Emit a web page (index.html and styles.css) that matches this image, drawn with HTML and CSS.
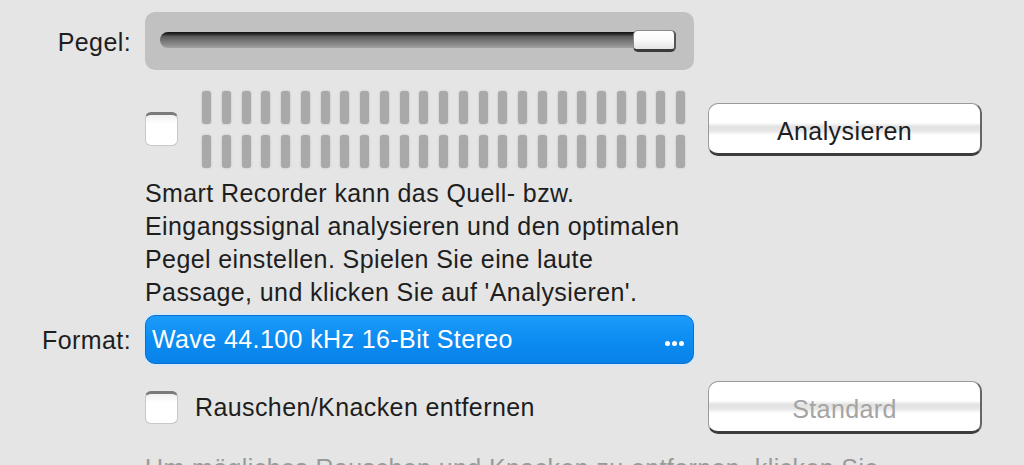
FILE: index.html
```html
<!DOCTYPE html>
<html lang="de">
<head>
<meta charset="utf-8">
<title>Smart Recorder</title>
<link rel="stylesheet" href="styles.css">
</head>
<body>
<div class="panel">
  <div class="row row-level">
    <div class="label">Pegel:</div>
    <div class="slider">
      <div class="track"><div class="thumb"></div></div>
    </div>
    <div></div>
  </div>

  <div class="row row-meter">
    <div></div>
    <div class="meter-wrap">
      <div class="checkbox"></div>
      <div class="meter">
        <div class="bars">
          <span></span><span></span><span></span><span></span><span></span><span></span><span></span><span></span><span></span><span></span><span></span><span></span><span></span><span></span><span></span><span></span><span></span><span></span><span></span><span></span><span></span><span></span><span></span><span></span><span></span>
        </div>
        <div class="bars">
          <span></span><span></span><span></span><span></span><span></span><span></span><span></span><span></span><span></span><span></span><span></span><span></span><span></span><span></span><span></span><span></span><span></span><span></span><span></span><span></span><span></span><span></span><span></span><span></span><span></span>
        </div>
      </div>
    </div>
    <div class="btn-cell"><button class="btn">Analysieren</button></div>
  </div>

  <div class="row row-text">
    <div></div>
    <p class="info">Smart Recorder kann das Quell- bzw.<br>Eingangssignal analysieren und den optimalen<br>Pegel einstellen. Spielen Sie eine laute<br>Passage, und klicken Sie auf 'Analysieren'.</p>
    <div></div>
  </div>

  <div class="row row-format">
    <div class="label">Format:</div>
    <div class="select"><span>Wave 44.100 kHz 16-Bit Stereo</span><span class="dots"><i></i><i></i><i></i></span></div>
    <div></div>
  </div>

  <div class="row row-noise">
    <div></div>
    <label class="check-line"><span class="checkbox small"></span><span>Rauschen/Knacken entfernen</span></label>
    <div class="btn-cell"><button class="btn disabled">Standard</button></div>
  </div>

  <div class="row row-hint">
    <div></div>
    <p class="hint">Um mögliches Rauschen und Knacken zu entfernen, klicken Sie</p>
    <div></div>
  </div>
</div>
</body>
</html>
```

FILE: styles.css
```css
html, body {
  margin: 0;
  padding: 0;
  height: 100%;
  overflow: hidden;
  background: #e5e5e5;
  font-family: "Liberation Sans", Arial, sans-serif;
  font-size: 25px;
  letter-spacing: 0.4px;
  color: #1e1e1e;
}

.panel {
  padding-top: 12px;
}

.row {
  display: grid;
  grid-template-columns: 131px 549px 274px;
  column-gap: 14px;
  align-items: center;
}

.label {
  text-align: right;
  color: #1e1e1e;
  margin-top: 2px;
}

/* Level slider */
.row-level { height: 58px; }
.slider {
  height: 58px;
  background: #c1c1c1;
  border-radius: 10px;
  padding: 20px 18px 0 15px;
  box-sizing: border-box;
}
.track {
  position: relative;
  height: 16px;
  border-radius: 8px 4px 4px 8px;
  background: linear-gradient(#101010 0, #262626 12%, #5a5a5a 28%, #767676 55%, #8c8c8c 80%, #a2a2a2 100%);
}
.thumb {
  position: absolute;
  right: 0;
  top: -2px;
  width: 43px;
  height: 22px;
  box-sizing: border-box;
  border-radius: 5px;
  background: linear-gradient(#ffffff 0, #fafafa 50%, #e4e4e4 100%);
  border: 1px solid #8a8a8a;
  border-bottom: 3px solid #3a3a3a;
  border-right: 2px solid #555;
}

/* Meter */
.row-meter {
  margin-top: 20px;
  height: 78px;
}
.meter-wrap {
  display: flex;
  align-items: center;
  gap: 24px;
  height: 78px;
}
.checkbox {
  width: 33px;
  height: 34px;
  box-sizing: border-box;
  background: linear-gradient(#f0f0f0, #ffffff 30%);
  border: 1px solid #c8c8c8;
  border-top: 3px solid #7a7a7a;
  border-radius: 6px;
  flex: none;
}
.meter {
  display: flex;
  flex-direction: column;
  gap: 11px;
}
.bars {
  display: flex;
  gap: 10.75px;
}
.bars span {
  width: 9px;
  height: 33px;
  border-radius: 3px;
  background: #a9a9a9;
  box-shadow: 0 0 2px #b6b6b6;
}

.btn-cell {
  display: flex;
  align-items: center;
}
.btn {
  width: 274px;
  height: 53px;
  box-sizing: border-box;
  font-family: "Liberation Sans", Arial, sans-serif;
  font-size: 25px;
  letter-spacing: 0.4px;
  color: #1e1e1e;
  border: 1px solid #9a9a9a;
  border-bottom: 3px solid #3c3c3c;
  border-right: 2px solid #666;
  border-radius: 10px;
  background: linear-gradient(#ffffff 0, #ffffff 38%, #e2e2e2 46%, #e6e6e6 54%, #ffffff 64%, #ffffff 100%);
  padding: 6px 0 0 0;
}
.btn.disabled {
  color: #a4a4a4;
}

/* Text */
.row-text {
  margin-top: 9px;
}
.info {
  margin: 0;
  line-height: 33px;
  color: #1e1e1e;
  white-space: nowrap;
}

/* Format select */
.row-format {
  margin-top: 6px;
}
.select {
  height: 49px;
  box-sizing: border-box;
  border-radius: 10px;
  background: linear-gradient(#1c9cf9 0, #0d8cf2 50%, #0782e9 100%);
  border: 1px solid #0a6fcf;
  box-shadow: 0 0 0 2px #d6e8f7;
  color: #ffffff;
  display: flex;
  align-items: center;
  justify-content: space-between;
  padding: 0 9px 0 6px;
}
.dots {
  display: flex;
  gap: 2px;
  margin-top: 8px;
}
.dots i {
  width: 5px;
  height: 5px;
  border-radius: 50%;
  background: #ffffff;
}

/* Noise */
.row-noise {
  margin-top: 17px;
  height: 53px;
}
.check-line {
  display: flex;
  align-items: center;
  gap: 17px;
}
.checkbox.small {
  height: 33px;
}

.row-hint {
  margin-top: 20px;
}
.hint {
  margin: 0;
  color: #9a9a9a;
  white-space: nowrap;
}
```
